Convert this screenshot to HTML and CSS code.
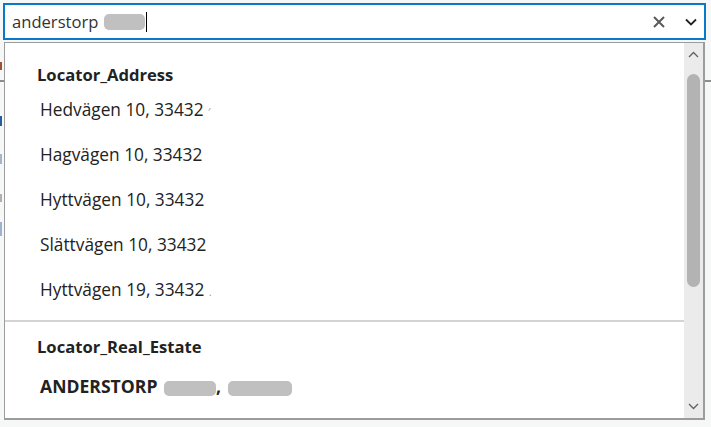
FILE: index.html
```html
<!DOCTYPE html>
<html>
<head>
<meta charset="utf-8">
<link rel="stylesheet" href="styles.css">
</head>
<body>
<div class="page">
  <div class="combo">
    <span class="value">anderstorp</span>
    <span class="blur blur-input"></span>
    <span class="caret"></span>
    <span class="spacer"></span>
    <svg class="clear" width="12" height="12" viewBox="0 0 12 12"><path d="M1 1 L11 11 M11 1 L1 11" stroke="#5a5a5a" stroke-width="2" fill="none"/></svg>
    <svg class="chev" width="12" height="8" viewBox="0 0 12 8"><path d="M1 1.5 L6 6.5 L11 1.5" stroke="#222" stroke-width="1.8" fill="none"/></svg>
  </div>
  <div class="backdrop">
    <div class="bg-mark mark-a"></div>
    <div class="bg-line"></div>
    <div class="bg-mark mark-u"></div>
    <div class="bg-mark mark-n"></div>
    <div class="bg-mark mark-s"></div>
    <div class="bg-mark mark-bar"></div>
  </div>

  <div class="dropdown">
    <div class="list">
      <div class="group">
        <div class="group-title">Locator_Address</div>
        <div class="item">Hedvägen 10, 33432 <span class="trace">&#x2032;</span></div>
        <div class="item">Hagvägen 10, 33432</div>
        <div class="item">Hyttvägen 10, 33432</div>
        <div class="item">Slättvägen 10, 33432</div>
        <div class="item">Hyttvägen 19, 33432 <span class="trace">.</span></div>
      </div>
      <div class="sep"></div>
      <div class="group">
        <div class="group-title title2">Locator_Real_Estate</div>
        <div class="item bold">ANDERSTORP <span class="blur blur-a"></span>, <span class="blur blur-b"></span></div>
      </div>
    </div>
    <div class="scrollbar">
      <svg class="arrow" width="11" height="7" viewBox="0 0 11 7"><path d="M1 6 L5.5 1.5 L10 6" stroke="#606060" stroke-width="1.3" fill="none"/></svg>
      <div class="track"><div class="thumb"></div></div>
      <svg class="arrow" width="11" height="7" viewBox="0 0 11 7"><path d="M1 1 L5.5 5.5 L10 1" stroke="#606060" stroke-width="1.3" fill="none"/></svg>
    </div>
  </div>
</div>
</body>
</html>
```
FILE: styles.css
```css
html, body {
  margin: 0;
  padding: 0;
}
body {
  background: #f6f7f7;
  font-family: "Open Sans", "Noto Sans", sans-serif;
  color: #222;
  width: 711px;
  height: 427px;
  overflow: hidden;
}
.page {
  position: relative;
  width: 711px;
  height: 427px;
  padding-top: 3px;
  box-sizing: border-box;
}
.combo {
  margin: 0 5px 0 3px;
  height: 37px;
  box-sizing: border-box;
  border: 2px solid #0a78c8;
  background: #fff;
  display: flex;
  align-items: center;
  padding: 0 7px 0 7px;
}
.value {
  font-size: 16.6px;
  color: #333;
}
.blur {
  display: inline-block;
  background: #c0c0c0;
  border-radius: 5px;
  vertical-align: middle;
}
.blur-input {
  width: 41px;
  height: 16px;
  margin-left: 6px;
}
.caret {
  width: 1px;
  height: 20px;
  background: #000;
  margin-left: 1px;
}
.spacer {
  flex: 1;
}
.clear {
  margin-right: 20px;
}
.backdrop {
  display: flex;
  flex-direction: column;
  padding-top: 22px;
}
.bg-mark {
  width: 2px;
}
.mark-a { height: 8px; background: #a0522d; margin-bottom: 10px; }
.bg-line { height: 2px; background: #8c8c8c; }
.mark-u { height: 10px; background: #2a5aa0; margin-top: 34px; }
.mark-n { height: 10px; background: #a8b4c8; margin-top: 28px; }
.mark-s { height: 8px; background: #b0b0b0; margin-top: 30px; }
.mark-bar { height: 14px; background: #9fb0d0; margin-top: 20px; }

.dropdown {
  position: absolute;
  left: 4px;
  top: 42px;
  width: 701px;
  height: 378px;
  box-sizing: border-box;
  border: 1px solid #9c9c9c;
  border-right-width: 2px;
  border-bottom-width: 2px;
  background: #fff;
  display: flex;
}
.list {
  flex: 1;
  display: flex;
  flex-direction: column;
  overflow: hidden;
}
.group {
  display: flex;
  flex-direction: column;
}
.group-title {
  font-weight: 700;
  font-size: 16.6px;
  color: #222;
  padding-left: 32px;
  height: 22px;
  line-height: 22px;
  margin-top: 21px;
  margin-bottom: 1px;
}
.title2 {
  margin-top: 14px;
  margin-bottom: 8px;
}
.item {
  font-size: 17.3px;
  color: #222;
  padding-left: 35px;
  height: 45px;
  line-height: 45px;
  white-space: nowrap;
}
.item.bold {
  font-weight: 700;
  font-size: 17.6px;
  height: 40px;
  line-height: 40px;
}
.trace {
  color: #999;
  font-size: 11px;
}
.blur-a {
  width: 52px;
  height: 15px;
  margin-left: 2px;
}
.blur-b {
  width: 64px;
  height: 15px;
  margin-left: 2px;
}
.sep {
  height: 2px;
  background: #d4d4d4;
  margin-top: 8px;
}
.scrollbar {
  width: 19px;
  background: #ebebeb;
  display: flex;
  flex-direction: column;
  align-items: center;
  padding: 8px 0 8px;
  box-sizing: border-box;
}
.track {
  flex: 1;
  width: 100%;
  display: flex;
  justify-content: center;
  padding-top: 16px;
}
.thumb {
  width: 13px;
  height: 213px;
  background: #b3b3b3;
  border-radius: 7px;
}
```
